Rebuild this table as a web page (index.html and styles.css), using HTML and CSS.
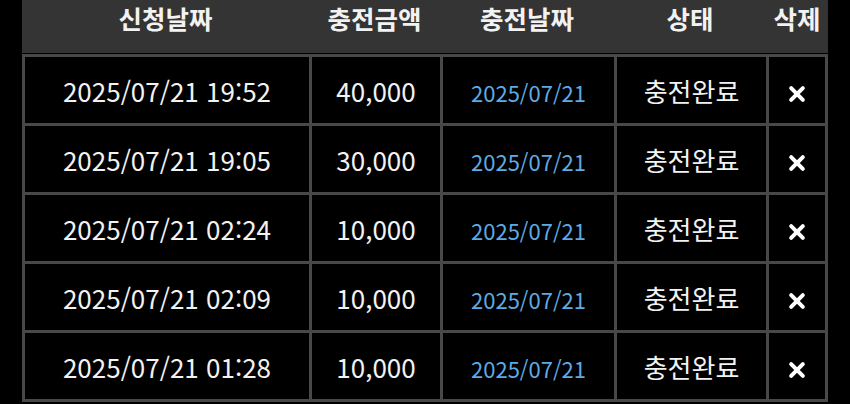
FILE: index.html
```html
<!DOCTYPE html>
<html lang="ko">
<head>
    <meta charset="UTF-8">
    <meta name="viewport" content="width=device-width, initial-scale=1.0">
    <title>충전내역</title>
    <link rel="stylesheet" href="styles.css">
</head>
<body>
    <div class="container">
        <!-- 헤더 -->
        <div class="list-head">
            <div>신청날짜</div>
            <div>충전금액</div>
            <div>충전날짜</div>
            <div>상태</div>
            <div>삭제</div>
        </div>

        <!-- 충전 내역 -->
        <div class="list-body">
            <div class="cell">2025/07/21 19:52</div>
            <div class="cell">40,000</div>
            <div class="cell date">2025/07/21</div>
            <div class="cell">충전완료</div>
            <div class="cell del"><svg viewBox="0 0 17 17"><path d="M3 3L14 14M14 3L3 14"/></svg></div>

            <div class="cell">2025/07/21 19:05</div>
            <div class="cell">30,000</div>
            <div class="cell date">2025/07/21</div>
            <div class="cell">충전완료</div>
            <div class="cell del"><svg viewBox="0 0 17 17"><path d="M3 3L14 14M14 3L3 14"/></svg></div>

            <div class="cell">2025/07/21 02:24</div>
            <div class="cell">10,000</div>
            <div class="cell date">2025/07/21</div>
            <div class="cell">충전완료</div>
            <div class="cell del"><svg viewBox="0 0 17 17"><path d="M3 3L14 14M14 3L3 14"/></svg></div>

            <div class="cell">2025/07/21 02:09</div>
            <div class="cell">10,000</div>
            <div class="cell date">2025/07/21</div>
            <div class="cell">충전완료</div>
            <div class="cell del"><svg viewBox="0 0 17 17"><path d="M3 3L14 14M14 3L3 14"/></svg></div>

            <div class="cell">2025/07/21 01:28</div>
            <div class="cell">10,000</div>
            <div class="cell date">2025/07/21</div>
            <div class="cell">충전완료</div>
            <div class="cell del"><svg viewBox="0 0 17 17"><path d="M3 3L14 14M14 3L3 14"/></svg></div>
        </div>
    </div>
</body>
</html>
```

FILE: styles.css
```css
/* 기본 스타일 */
body {
    font-family: 'Noto Sans CJK KR', 'Noto Sans', sans-serif;
    margin: 0;
    padding: 0;
    background-color: #000;
    color: #f2f2f2;
    overflow: hidden;
}
.container {
    width: 806px;
    margin-left: 22px;
}

/* 헤더 */
.list-head {
    display: grid;
    grid-template-columns: 287px 131px 174px 152px 62px;
    background-color: #343434;
    height: 53px;
    margin-bottom: 1px;
}
.list-head div {
    text-align: center;
    font-size: 25.5px;
    font-weight: bold;
    line-height: 36px;
}

/* 목록 */
.list-body {
    display: grid;
    grid-template-columns: 284px 128px 171px 149px 56px;
    grid-auto-rows: 66px;
    gap: 3px;
    padding: 3px;
    background-color: #484848;
}
.cell {
    background-color: #000;
    display: flex;
    align-items: center;
    justify-content: center;
    font-size: 26px;
}
.cell.date {
    font-size: 22px;
    color: #5eaae4;
    padding-top: 3px;
}
.cell.del svg {
    width: 18px;
    height: 18px;
    margin-top: 8px;
    stroke: #fff;
    stroke-width: 3.8;
    stroke-linecap: round;
    fill: none;
}
```
